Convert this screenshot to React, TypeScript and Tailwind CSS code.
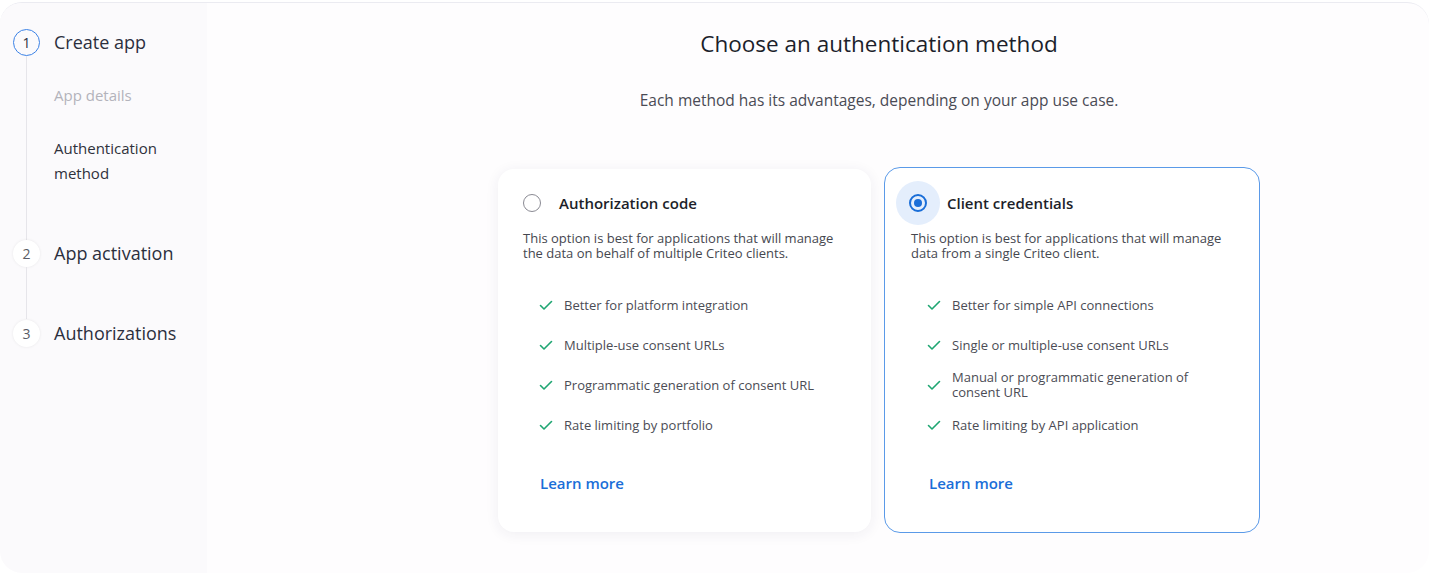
import React from "react";

const Check = () => (
  <svg width="14" height="14" viewBox="0 0 14 14" fill="none" className="shrink-0">
    <path d="M1.5 7.5 L5 11 L12.5 3.5" stroke="#1fa672" strokeWidth="1.6" strokeLinecap="round" strokeLinejoin="round" />
  </svg>
);

function Card({
  selected,
  title,
  desc,
  items,
}: {
  selected: boolean;
  title: string;
  desc: React.ReactNode;
  items: React.ReactNode[];
}) {
  return (
    <div
      className={
        selected
          ? "w-[376px] h-[366px] rounded-[16px] border-[1.5px] border-[#5b9ae8] bg-white pl-[26px] pr-[20px] pt-[13px]"
          : "w-[373px] h-[363px] mt-[2px] rounded-[16px] bg-white shadow-[0_2px_14px_rgba(40,40,80,0.07)] pl-[25px] pr-[20px] pt-[12px]"
      }
    >
      <div className="flex items-center h-[44px]">
        {selected ? (
          <div className="w-[44px] h-[44px] -ml-[15px] rounded-full bg-[#e4eefc] flex items-center justify-center">
            <div className="w-[18px] h-[18px] rounded-full border-2 border-[#1a6ed8] flex items-center justify-center">
              <div className="w-[8px] h-[8px] rounded-full bg-[#1a6ed8]" />
            </div>
          </div>
        ) : (
          <div className="w-[18px] h-[18px] rounded-full border-[1.5px] border-[#8a8a93] bg-white" />
        )}
        <div className={selected ? "ml-[7px] text-[15px] font-semibold text-[#1d1f2a]" : "ml-[18px] text-[15px] font-semibold text-[#1d1f2a]"}>
          {title}
        </div>
      </div>
      <div className="mt-[6px] text-[13px] leading-[15px] text-[#45474f]">{desc}</div>
      <div className="mt-[24px] flex flex-col pl-[16px]">
        {items.map((it, i) => (
          <div key={i} className="flex items-center gap-[11px] h-[40px] text-[13px] leading-[15px] text-[#4b4c55]">
            <Check />
            <div>{it}</div>
          </div>
        ))}
      </div>
      <div className={selected ? "mt-[28px] pl-[18px] text-[15px] leading-[20px] font-semibold text-[#1a6ed8]" : "mt-[28px] pl-[17px] text-[15px] leading-[20px] font-semibold text-[#1a6ed8]"}>
        Learn more
      </div>
    </div>
  );
}

export default function App() {
  return (
    <div className="w-[1429px] h-[573px] bg-white" style={{ fontFamily: '"Open Sans", "Noto Sans", sans-serif' }}>
      <div className="mt-[2px] h-[571px] rounded-[22px] border-t border-[#ebebf1] overflow-hidden flex bg-[#fefdfe]">
        {/* Sidebar */}
        <div className="w-[207px] shrink-0 bg-[#fbfafc] pl-[13px] pt-[25px]">
          <div className="flex items-center h-[28px]">
            <div className="w-[27px] h-[27px] rounded-full border-[1.5px] border-[#3b82e6] flex items-center justify-center text-[14px] text-[#2b2f3e]">1</div>
            <div className="ml-[14px] text-[18px] text-[#2b2f3e]">Create app</div>
          </div>
          <div className="flex">
            <div className="w-[27px] flex justify-center">
              <div className="w-px h-[187px] bg-[#e6e5ea]" />
            </div>
            <div className="ml-[14px] pt-[28px]">
              <div className="text-[15px] text-[#b3b3bb]">App details</div>
              <div className="mt-[29px] text-[15px] leading-[25px] text-[#2f313b]">
                Authentication
                <br />
                method
              </div>
            </div>
          </div>
          <div className="flex items-center h-[28px] -mt-[4px]">
            <div className="w-[27px] h-[27px] rounded-full bg-white shadow-[0_0_3px_rgba(0,0,0,0.08)] flex items-center justify-center text-[14px] text-[#5a5c66]">2</div>
            <div className="ml-[14px] text-[18px] text-[#2b2f3e]">App activation</div>
          </div>
          <div className="flex">
            <div className="w-[27px] flex justify-center">
              <div className="w-px h-[52px] bg-[#e6e5ea]" />
            </div>
          </div>
          <div className="flex items-center h-[28px]">
            <div className="w-[27px] h-[27px] rounded-full bg-white shadow-[0_0_3px_rgba(0,0,0,0.08)] flex items-center justify-center text-[14px] text-[#5a5c66]">3</div>
            <div className="ml-[14px] text-[18px] text-[#2b2f3e]">Authorizations</div>
          </div>
        </div>

        {/* Main */}
        <div className="flex-1 flex justify-center pl-[122px]">
          <div className="w-[762px] flex flex-col items-center">
            <div className="mt-[26px] text-[22.5px] leading-[30px] text-[#1c1f2b]">Choose an authentication method</div>
            <div className="mt-[31px] text-[15.5px] leading-[20px] text-[#4a4b55]">
              Each method has its advantages, depending on your app use case.
            </div>
            <div className="mt-[57px] w-full flex justify-between items-start">
              <Card
                selected={false}
                title="Authorization code"
                desc={
                  <>
                    This option is best for applications that will manage
                    <br />
                    the data on behalf of multiple Criteo clients.
                  </>
                }
                items={[
                  "Better for platform integration",
                  "Multiple-use consent URLs",
                  "Programmatic generation of consent URL",
                  "Rate limiting by portfolio",
                ]}
              />
              <Card
                selected={true}
                title="Client credentials"
                desc={
                  <>
                    This option is best for applications that will manage
                    <br />
                    data from a single Criteo client.
                  </>
                }
                items={[
                  "Better for simple API connections",
                  "Single or multiple-use consent URLs",
                  <>
                    Manual or programmatic generation of
                    <br />
                    consent URL
                  </>,
                  "Rate limiting by API application",
                ]}
              />
            </div>
          </div>
        </div>
      </div>
    </div>
  );
}
